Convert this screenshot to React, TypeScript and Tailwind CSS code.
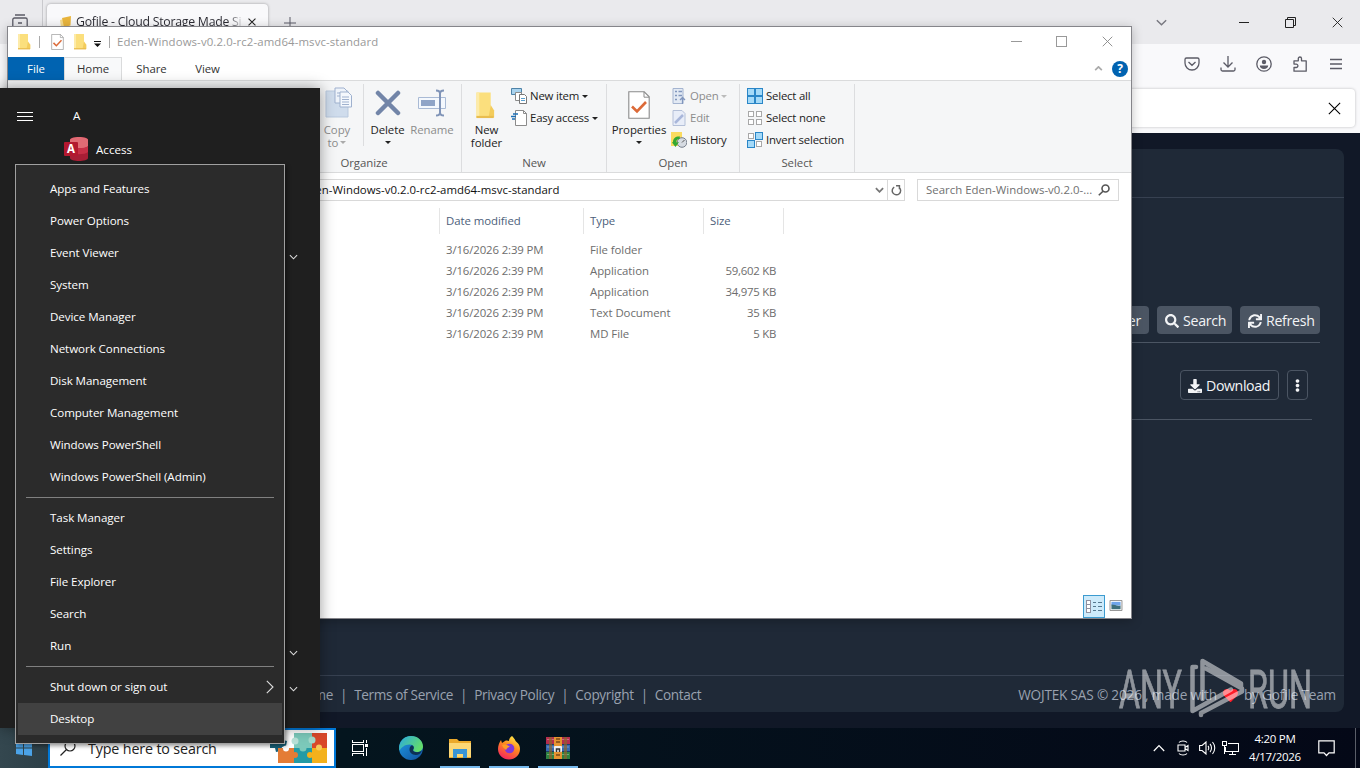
import React from "react";
import { FaSearch, FaSync, FaDownload, FaEllipsisV, FaHeart } from "react-icons/fa";

const files = [
    { date: "3/16/2026 2:39 PM", type: "File folder", size: "" },
    { date: "3/16/2026 2:39 PM", type: "Application", size: "59,602 KB" },
    { date: "3/16/2026 2:39 PM", type: "Application", size: "34,975 KB" },
    { date: "3/16/2026 2:39 PM", type: "Text Document", size: "35 KB" },
    { date: "3/16/2026 2:39 PM", type: "MD File", size: "5 KB" },
];

const menuGroups = [
    [
        "Apps and Features",
        "Power Options",
        "Event Viewer",
        "System",
        "Device Manager",
        "Network Connections",
        "Disk Management",
        "Computer Management",
        "Windows PowerShell",
        "Windows PowerShell (Admin)",
    ],
    ["Task Manager", "Settings", "File Explorer", "Search", "Run"],
    ["Shut down or sign out", "Desktop"],
];

function FolderIcon({ className }: { className: string }) {
    return (
        <svg viewBox="0 0 14 18" className={className} preserveAspectRatio="none">
            <path d="M1 1h10v11l2 1v4H1z" fill="#fbdf7d" />
            <path d="M1 1h2v16H1z" fill="#fdeba9" />
            <path d="M11 9l2.4 3.5V17H9.5z" fill="#f3cc5c" />
            <path d="M1 16h12v1.4H1z" fill="#e9bd4f" />
        </svg>
    );
}

function CheckSheet({ className }: { className: string }) {
    return (
        <svg viewBox="0 0 22 28" className={className} fill="none">
            <path d="M.8.8h15.4l5 5v21.4H.8z" fill="#fff" stroke="#8b8b8b" strokeWidth="1.1" />
            <path d="M16 .8v5.4h5" stroke="#8b8b8b" />
            <path d="M4 15.5l5 5 9-9.5" stroke="#dc6a38" strokeWidth="2.6" />
        </svg>
    );
}

function Caret({ className = "text-[#222]" }: { className?: string }) {
    return (
        <svg viewBox="0 0 6 3" className={`h-[3px] w-[6px] shrink-0 ${className}`}>
            <path d="M0 0h6L3 3z" fill="currentColor" />
        </svg>
    );
}

function Chevron({ className }: { className: string }) {
    return (
        <svg viewBox="0 0 10 6" className={className} fill="none" stroke="currentColor" strokeWidth="1.2">
            <path d="M1 1l4 4 4-4" />
        </svg>
    );
}

function Cross({ className }: { className: string }) {
    return (
        <svg viewBox="0 0 12 12" className={className} fill="none" stroke="currentColor">
            <path d="M.8.8l10.4 10.4M11.2.8L.8 11.2" />
        </svg>
    );
}

function BrowserWindow() {
    return (
        <div className="absolute inset-x-0 top-0 flex h-[728px] flex-col bg-[#f9f9fb]">
            <div className="flex h-11 shrink-0 bg-[#eaeaed]">
                <div className="flex h-[27px] w-[43px] border-r border-[#c9c9cd] pt-[14px] pl-3">
                    <svg viewBox="0 0 16 16" className="size-4" fill="none" stroke="#5b5b66" strokeWidth="1.3">
                        <path d="M3 1h10M2.5 4h11a1.7 1.7 0 0 1 1.7 1.7V14H.8V5.7A1.7 1.7 0 0 1 2.500 4zM6 9h4" />
                    </svg>
                </div>
                <div className="mt-1 ml-1 flex h-9 w-[221px] items-center rounded bg-[#f9f9fb] pr-[12px] pl-[12px] shadow-[0_0_3px_rgba(0,0,0,0.35)]">
                    <svg viewBox="0 0 14 14" className="size-3.5" fill="none">
                        <path d="M1 5l4-1 1 8-4 1z" fill="#f7dc8e" />
                        <path d="M3 3l9-2-.5 9.500L5 12z" fill="#e9b53c" />
                    </svg>
                    <span className="ml-[3px] w-[168px] bg-linear-to-r from-[#2a2a32] from-90% to-transparent bg-clip-text pt-px text-[12.3px] tracking-[-0.25px] whitespace-nowrap text-transparent">
                        Gofile - Cloud Storage Made Si
                    </span>
                    <Cross className="ml-auto size-2 shrink-0 stroke-[1.6] text-[#222]" />
                </div>
                <svg viewBox="0 0 12 12" className="mt-[17px] ml-4 size-3" stroke="#5b5b66" strokeWidth="1">
                    <path d="M6 0v12M0 6h12" />
                </svg>
                <div className="ml-auto flex h-11 items-center text-[#222]">
                    <Chevron className="mr-[71px] h-[7px] w-[13px] text-[#77777f]" />
                    <div className="mr-[36px] h-px w-[10px] bg-[#222]" />
                    <svg viewBox="0 0 11 11" className="mr-[36px] size-[11px]" fill="none" stroke="#222">
                        <path d="M.5 2.500h8v8h-8zM2.500 2.500v-2h8v8h-2" />
                    </svg>
                    <Cross className="mr-[17px] size-[11px]" />
                </div>
            </div>
            <div className="flex h-11 shrink-0 items-center justify-end gap-5 pr-4 pb-1 text-[#5b5b66]">
                <svg viewBox="0 0 16 16" className="size-4" fill="none" stroke="currentColor" strokeWidth="1.3">
                    <path d="M2.500 2h11a1.500 1.500 0 0 1 1.500 1.500V7A7 7 0 0 1 1 7V3.500A1.500 1.500 0 0 1 2.500 2zM4.500 6L8 9.300 11.500 6" />
                </svg>
                <svg viewBox="0 0 16 16" className="size-4" fill="none" stroke="currentColor" strokeWidth="1.3">
                    <path d="M8 0v10.500M3.500 6.500L8 11l4.500-4.500M1 11.500v2a1.500 1.500 0 0 0 1.500 1.500h11a1.500 1.500 0 0 0 1.500-1.500v-2" />
                </svg>
                <svg viewBox="0 0 16 16" className="size-4" fill="none" stroke="currentColor" strokeWidth="1.3">
                    <circle cx="8" cy="8" r="7.2" />
                    <circle cx="8" cy="6" r="2.2" fill="currentColor" stroke="none" />
                    <path d="M3.800 9.500h8.400c0 2-1.800 3.500-4.200 3.500s-4.200-1.500-4.200-3.500z" fill="currentColor" stroke="none" />
                </svg>
                <svg viewBox="0 0 16 16" className="size-4" fill="none" stroke="currentColor" strokeWidth="1.3">
                    <path
                        d="M2 15.200V11.500h2.200a1.700 1.700 0 0 0 0-3.400H2V4.800h4.300V2.600a1.600 1.600 0 0 1 3.200 0v2.200h4.700v10.400z"
                        strokeLinejoin="round"
                    />
                </svg>
                <svg viewBox="0 0 16 16" className="size-4" stroke="currentColor" strokeWidth="1.3">
                    <path d="M2 3.500h12M2 8h12M2 12.500h12" />
                </svg>
            </div>
            <div className="h-[45px] shrink-0 pt-px pr-[5px]">
                <div className="flex h-[38px] items-center justify-end rounded bg-white pr-[14px] shadow-[0_0_3px_rgba(0,0,0,0.25)]">
                    <Cross className="size-[13px] text-black" />
                </div>
            </div>
            <div className="flex-1 bg-[#111827] p-4">
                <div className="flex h-[563px] flex-col rounded-lg bg-[#1f2937] text-[14.2px] tracking-[-0.3px] text-gray-100">
                    <div className="h-[49px] shrink-0 border-b border-[#374151]" />
                    <div className="mt-[108px] mr-6 flex h-[37px] shrink-0 justify-end gap-2 border-b border-[#4b5563]">
                        <div className="flex h-7 items-center rounded bg-[#4b5563] px-2 pt-[2px]">Create Folder</div>
                        <div className="flex h-7 w-[75px] items-center gap-1 rounded bg-[#4b5563] pt-[2px] pl-2">
                            <FaSearch className="size-[14px] shrink-0" />
                            Search
                        </div>
                        <div className="flex h-7 w-20 items-center gap-1 rounded bg-[#4b5563] pt-[2px] pl-2">
                            <FaSync className="size-[14px] shrink-0" />
                            Refresh
                        </div>
                    </div>
                    <div className="mt-[27px] mr-8 flex h-[50px] shrink-0 justify-end gap-2 border-b border-[#4b5563] pr-1">
                        <div className="flex h-[30px] w-[99px] items-center gap-1 rounded border border-[#4b5563] pt-[2px] pl-[7px] tracking-[-0.4px]">
                            <FaDownload className="size-[14px] shrink-0" />
                            Download
                        </div>
                        <div className="flex h-[30px] w-[21px] items-center justify-center rounded border border-[#4b5563]">
                            <FaEllipsisV className="size-[13px]" />
                        </div>
                    </div>
                    <div className="mt-auto flex h-[37px] items-center gap-[7px] border-t border-[#374151] pt-[3px] pr-2 pl-[277px] text-[13.6px] tracking-[-0.35px] text-gray-400">
                        <span className="w-10 text-right">Home</span>
                        <span>|</span>
                        <span>Terms of Service</span>
                        <span>|</span>
                        <span>Privacy Policy</span>
                        <span>|</span>
                        <span>Copyright</span>
                        <span>|</span>
                        <span>Contact</span>
                        <span className="ml-auto flex items-center gap-[5px] tracking-[-0.18px]">
                            WOJTEK SAS © 2026 , made with <FaHeart className="mx-px size-[15px] text-[#ff1c28]" /> by Gofile Team
                        </span>
                    </div>
                </div>
            </div>
        </div>
    );
}

function RibbonGroup({ label, className, children }: { label: string; className: string; children: React.ReactNode }) {
    return (
        <div className={`flex h-[88px] shrink-0 flex-col border-r border-[#dcdddf] ${className}`}>
            <div className="flex h-[71px]">{children}</div>
            <div className="text-center leading-4 text-[#555]">{label}</div>
        </div>
    );
}

function BigButton({ icon, lines, caret, className }: { icon: React.ReactNode; lines: string[]; caret?: boolean; className: string }) {
    return (
        <div className={`flex shrink-0 flex-col items-center leading-[13px] whitespace-nowrap ${className}`}>
            <div className="mb-[3px] flex h-9 items-center justify-center pt-px">{icon}</div>
            {lines.map((line, i) => (
                <div key={line} className="flex items-center gap-[2px]">
                    {line}
                    {caret && i > 0 && i === lines.length - 1 && <Caret className="text-[#aaa]" />}
                </div>
            ))}
            {caret && lines.length === 1 && (
                <div className="pt-[5px]">
                    <Caret />
                </div>
            )}
        </div>
    );
}

function SmallButton({ icon, label, caret, muted }: { icon: React.ReactNode; label: string; caret?: boolean; muted?: boolean }) {
    return (
        <div className={`flex h-[22px] items-center gap-[3px] tracking-[-0.2px] whitespace-nowrap ${muted ? "text-[#8c8c8c]" : ""}`}>
            <div className="flex w-4 shrink-0 justify-center">{icon}</div>
            <span>{label}</span>
            {caret && <Caret className={muted ? "text-[#bbb]" : "text-[#222]"} />}
        </div>
    );
}

function Squares({ filled }: { filled: number[] }) {
    return (
        <svg viewBox="0 0 16 16" className="size-4" shapeRendering="crispEdges">
            {[0, 1, 2, 3].map((i) => {
                const on = filled.includes(i);
                const x = (i % 2) * 8;
                const y = Math.floor(i / 2) * 8;
                return on ? (
                    <rect key={i} x={x + 0.5} y={y + 0.5} width="7" height="7" fill="#a5daf8" stroke="#2a86c7" />
                ) : (
                    <rect key={i} x={x + 1.5} y={y + 1.5} width="5" height="5" fill="#fff" stroke="#a8a8a8" />
                );
            })}
        </svg>
    );
}

function Ribbon() {
    return (
        <div className="flex h-[93px] shrink-0 border-y border-[#dadbdc] bg-[#f5f6f7] pt-[3px] pl-[259px] text-[#222]">
            <RibbonGroup label="Organize" className="w-[195px]">
                <BigButton
                    className="ml-12 w-11 text-[#8c8c8c]"
                    lines={["Copy", "to"]}
                    caret
                    icon={
                        <svg viewBox="0 0 28 32" className="ml-1 h-8 w-7" fill="none">
                            <path d="M1 4h22v26H1z" fill="#cfdcec" stroke="#b9c9de" />
                            <path d="M10 1h9l3 3v12H10z" fill="#eef3fa" stroke="#9fb1ce" />
                            <path d="M15 5h8l3.500 3.500V20H15z" fill="#f4f8fd" stroke="#9fb1ce" />
                            <path d="M17 10h7M17 12.500h7M17 15h7M17 17.500h7M12 6h3M12 9h3" stroke="#9fb1ce" />
                        </svg>
                    }
                />
                <div className="mx-1 h-[62px] w-px bg-[#dcdddf]" />
                <BigButton
                    className="w-[39px]"
                    lines={["Delete"]}
                    caret
                    icon={
                        <svg viewBox="0 0 26 26" className="size-[26px]" stroke="#7285a8" strokeWidth="4.5" strokeLinecap="round">
                            <path d="M3 3l20 20M23 3L3 23" />
                        </svg>
                    }
                />
                <BigButton
                    className="ml-px w-12 text-[#8c8c8c]"
                    lines={["Rename"]}
                    icon={
                        <svg viewBox="0 0 28 28" className="size-7" fill="none">
                            <path d="M.5 8.500h27v11H.5z" fill="#f4f8fd" stroke="#a9bad5" />
                            <path d="M3 11h14v6H3z" fill="#8fa4c7" />
                            <path d="M18 1.500c3 0 4 1 4 3v19c0 2-1 3-4 3M26 1.500c-3 0-4 1-4 3M26 26.500c-3 0-4-1-4-3" stroke="#8094b8" strokeWidth="2" />
                        </svg>
                    }
                />
            </RibbonGroup>
            <RibbonGroup label="New" className="w-[145px]">
                <BigButton className="w-[49px]" lines={["New", "folder"]} icon={<FolderIcon className="mt-1 mr-1 h-7 w-5" />} />
                <div className="flex flex-col pt-px">
                    <SmallButton
                        label="New item"
                        caret
                        icon={
                            <svg viewBox="0 0 16 16" className="size-4" fill="none">
                                <path d="M.5.500h10v6H.5z" fill="#a9d3ee" stroke="#4e83a8" />
                                <path d="M4.500 4.500h6v8h-6z" fill="#fff" stroke="#8b8b8b" />
                                <path d="M8.500 6.500h5l2 2v7h-7z" fill="#fff" stroke="#777" />
                                <path d="M10 10.500h4M10 12.500h4" stroke="#5aa0cf" />
                            </svg>
                        }
                    />
                    <SmallButton
                        label="Easy access"
                        caret
                        icon={
                            <svg viewBox="0 0 16 16" className="size-4" fill="none">
                                <path d="M4.500.500h8l3 3v12h-11z" fill="#fff" stroke="#8b8b8b" />
                                <path d="M12.500.500v3h3" stroke="#8b8b8b" />
                                <path d="M2 4h5M0 6.500h5M1 9h3" stroke="#1c6fb5" strokeWidth="1.4" />
                            </svg>
                        }
                    />
                </div>
            </RibbonGroup>
            <RibbonGroup label="Open" className="w-[133px]">
                <BigButton className="w-16" lines={["Properties"]} caret icon={<CheckSheet className="mt-1 h-7 w-[22px]" />} />
                <div className="flex flex-col pt-px">
                    <SmallButton
                        label="Open"
                        caret
                        muted
                        icon={
                            <svg viewBox="0 0 14 16" className="h-4 w-3.5" fill="none" stroke="#a4b4d0">
                                <path d="M1 .5h10v15H1z" fill="#e3eaf4" />
                                <path d="M3 3.500h2M3 7.500h2M3 11.500h2M6.500 3.500H10M6.500 7.500H10M10.500 16v-6M8 12l2.500-2.500L13 12" stroke="#8196bd" strokeWidth="1.3" />
                            </svg>
                        }
                    />
                    <SmallButton
                        label="Edit"
                        muted
                        icon={
                            <svg viewBox="0 0 14 16" className="h-4 w-3.5" fill="none" stroke="#b4c0d8">
                                <path d="M1 .5h9l3 3v12H1z" fill="#e8edf8" />
                                <path d="M3 13l8-8" stroke="#a9b7da" strokeWidth="2.5" />
                            </svg>
                        }
                    />
                    <SmallButton
                        label="History"
                        icon={
                            <svg viewBox="0 0 16 16" className="size-4 shrink-0" fill="none">
                                <path d="M0 0h11v14H0z" fill="#fbdb5f" />
                                <circle cx="11" cy="10.5" r="4.8" fill="#d6dbe2" stroke="#777f8c" />
                                <path d="M11 10.500l2.500-2.500" stroke="#555" />
                                <path d="M2 10c0-4 3-6 7-5.500L8.500 7C6 7 5 8.500 5.500 10.500L8 10l-3.500 5L1 10.500z" fill="#35a832" />
                            </svg>
                        }
                    />
                </div>
            </RibbonGroup>
            <RibbonGroup label="Select" className="w-[115px]">
                <div className="flex flex-col pt-px pl-[7px]">
                    <SmallButton label="Select all" icon={<Squares filled={[0, 1, 2, 3]} />} />
                    <SmallButton label="Select none" icon={<Squares filled={[]} />} />
                    <SmallButton label="Invert selection" icon={<Squares filled={[1, 2]} />} />
                </div>
            </RibbonGroup>
        </div>
    );
}

function ExplorerWindow() {
    return (
        <div className="absolute top-[26px] left-[7px] flex h-[593px] w-[1125px] flex-col border border-[#85858a] bg-white text-[11.4px] tracking-[-0.05px] shadow-[0_2px_10px_rgba(0,0,0,0.25)]">
            <div className="mb-px flex h-[29px] shrink-0 items-center">
                <FolderIcon className="ml-[9px] h-[17px] w-3.5" />
                <div className="ml-2 h-3 w-px bg-[#aaa]" />
                <CheckSheet className="ml-[11px] h-4 w-[13px]" />
                <FolderIcon className="ml-[9px] h-[17px] w-3.5" />
                <svg viewBox="0 0 7 6" className="mt-1 ml-[7px] h-[6px] w-[7px]">
                    <path d="M0 0h7v1H0zM0 2.500h7L3.500 6z" fill="#111" />
                </svg>
                <div className="ml-[8px] h-3 w-px bg-[#aaa]" />
                <span className="ml-[7px] tracking-[0.11px] text-[#999]">Eden-Windows-v0.2.0-rc2-amd64-msvc-standard</span>
                <div className="ml-auto flex items-center text-[#888]">
                    <div className="h-px w-[11px] bg-[#999]" />
                    <div className="ml-[34px] size-[11px] border border-[#999]" />
                    <Cross className="mr-[18px] ml-[35px] size-[11px]" />
                </div>
            </div>
            <div className="flex h-[23px] shrink-0 items-center text-[#333]">
                <div className="flex h-[23px] w-14 items-center justify-center bg-[#0063b1] text-white">File</div>
                <div className="flex h-[23px] w-[58px] items-center justify-center border-x border-t border-[#dadbdc] bg-[#f8f9fa]">Home</div>
                <div className="w-[59px] text-center">Share</div>
                <div className="w-[53px] text-center">View</div>
                <Chevron className="ml-auto h-[5px] w-[9px] rotate-180 stroke-2 text-[#aaa]" />
                <div className="mr-[3px] ml-[9px] flex size-4 items-center justify-center rounded-full bg-[#0063b1] text-[12px] font-bold text-white">?</div>
            </div>
            <Ribbon />
            <div className="flex h-[33px] shrink-0 items-center pt-px text-[#111]">
                <div className="ml-[91px] flex h-[22px] w-[806px] items-center border border-[#d9d9d9] pl-[202px]">
                    <span className="tracking-[0.02px]">Eden-Windows-v0.2.0-rc2-amd64-msvc-standard</span>
                    <Chevron className="mr-[3px] ml-auto h-[6px] w-[9px] stroke-2 text-[#777]" />
                    <div className="flex h-[22px] w-[17px] items-center justify-center border-l border-[#d9d9d9]">
                        <svg viewBox="0 0 12 12" className="size-[11px]" fill="none" stroke="#666" strokeWidth="1.6">
                            <path d="M3.500 2.200A4.600 4.600 0 1 0 9 2.700M5.500.800H9.200V4.500" />
                        </svg>
                    </div>
                </div>
                <div className="ml-3 flex h-[22px] w-[202px] items-center border border-[#d9d9d9] px-2 text-[#707070]">
                    <span className="tracking-[0.03px]">Search Eden-Windows-v0.2.0-...</span>
                    <svg viewBox="0 0 12 12" className="ml-auto size-3" fill="none" stroke="#555" strokeWidth="1.6">
                        <circle cx="7.5" cy="4.5" r="3.5" />
                        <path d="M5 7.200L.8 11.300" />
                    </svg>
                </div>
            </div>
            <div className="flex h-[29px] shrink-0 pt-[2px] pl-[431px] leading-[26px] text-[#4c607a]">
                <div className="h-[26px] w-36 border-l border-[#e5e5e5] pl-[6px]">Date modified</div>
                <div className="h-[26px] w-[120px] border-l border-[#e5e5e5] pl-[6px]">Type</div>
                <div className="h-[26px] w-[81px] border-x border-[#e5e5e5] pl-[6px]">Size</div>
            </div>
            <div className="pt-1 pl-[438px] leading-[21px] text-[#6d6d6d]">
                {files.map((file, i) => (
                    <div key={i} className="flex h-[21px]">
                        <span className="w-36 tracking-[-0.12px]">{file.date}</span>
                        <span className="w-[100px]">{file.type}</span>
                        <span className="w-[86px] text-right tracking-[-0.25px]">{file.size}</span>
                    </div>
                ))}
            </div>
            <div className="mt-auto flex items-center justify-end gap-1 pr-2">
                <div className="flex h-[23px] w-[22px] items-center justify-center border border-[#3c9bd0] bg-[#cdeafa]">
                    <svg viewBox="0 0 16 14" className="h-3.5 w-4" fill="none" shapeRendering="crispEdges">
                        <path d="M.5.500h4v4h-4zM.5 4.500h4v4h-4zM.5 8.500h4v4h-4z" fill="#fff" stroke="#8f8f9f" />
                        <path d="M7 2.500h3M12 2.500h4M7 6.500h3M12 6.500h4M7 10.500h3M12 10.500h4" stroke="#56788f" />
                    </svg>
                </div>
                <svg viewBox="0 0 14 12" className="mb-[2px] h-[11px] w-3.5">
                    <path d="M.5.500h13v11H.5z" fill="#fff" stroke="#8a8a8a" />
                    <path d="M2 2h10v4H2z" fill="#6ea4ea" />
                    <path d="M2 5c4 0 6 2 10 1v4H2z" fill="#3d6f7c" />
                </svg>
            </div>
        </div>
    );
}

function StartMenu() {
    return (
        <div className="absolute top-[88px] left-0 flex h-[640px] w-80 bg-[#1f1f1f] text-[11.6px] text-white shadow-[0_0_14px_rgba(0,0,0,0.4)]">
            <div className="flex w-12 flex-col gap-[3px] pt-6 pl-[17px]">
                <div className="h-px w-4 bg-white" />
                <div className="h-px w-4 bg-white" />
                <div className="h-px w-4 bg-white" />
            </div>
            <div className="flex-1 pt-[18px] pl-4">
                <div className="h-5 pl-[9px] leading-5">A</div>
                <div className="mt-[11px] flex items-center gap-2">
                    <svg viewBox="0 0 24 24" className="size-6">
                        <path d="M6 3c0-4 18-4 18 0v18c0 4-18 4-18 0z" fill="#a81e35" />
                        <path d="M6 3c0-4 18-4 18 0v6c0 3-18 3-18 0z" fill="#e06b74" />
                        <path d="M6 9c3 3 15 3 18 0v6c-3 3-15 3-18 0z" fill="#c72f46" />
                        <rect y="5" width="14" height="14" rx="1" fill="#b3182f" />
                        <text x="7" y="16.2" textAnchor="middle" fontSize="11.5" fontWeight="700" fill="#fff">A</text>
                    </svg>
                    <span className="pt-[2px]">Access</span>
                </div>
            </div>
            <div className="flex w-[31px] flex-col text-[#ddd]">
                <Chevron className="mt-[166px] h-[6px] w-[9px]" />
                <Chevron className="mt-[390px] h-[6px] w-[9px]" />
                <Chevron className="mt-[30px] h-[6px] w-[9px]" />
            </div>
        </div>
    );
}

function ContextMenu() {
    return (
        <div className="absolute top-[164px] left-[15px] h-[580px] w-[270px] border border-[#a0a0a0] bg-[#2b2b2b] px-[2px] pt-2 text-[11.6px] tracking-[-0.07px] text-white shadow-[2px_2px_4px_rgba(0,0,0,0.4)]">
            {menuGroups.map((group, index) => (
                <div key={index}>
                    {index > 0 && <div className="mx-2 my-1 h-px bg-[#808080]" />}
                    {group.map((item) => (
                        <div
                            key={item}
                            className={`flex h-8 items-center justify-between pr-2 pl-8 ${item === "Desktop" ? "bg-[#414141]" : ""}`}
                        >
                            {item}
                            {item.startsWith("Shut") && (
                                <svg viewBox="0 0 8 14" className="h-3.5 w-2" fill="none" stroke="#ddd" strokeWidth="1.1">
                                    <path d="M.8.800L7 7 .8 13.200" />
                                </svg>
                            )}
                        </div>
                    ))}
                </div>
            ))}
        </div>
    );
}

function Taskbar() {
    return (
        <div className="absolute inset-x-0 bottom-0 flex h-10 bg-linear-to-r from-[#34474f] via-[#04151e] via-25% to-[#040817] text-white">
            <div className="flex w-12 items-center justify-center">
                <svg viewBox="0 0 16 16" className="size-4" fill="#4ba3e8">
                    <path d="M0 2.200L7 1.200v6.400H0zM8 1l8-1v7.600H8zM0 8.500h7v6.400l-7-1zM8 8.500h8V16l-8-1z" />
                </svg>
            </div>
            <div className="flex w-72 items-center border-2 border-[#0078d7] bg-white pl-[9px] text-black">
                <svg viewBox="0 0 18 18" className="size-[18px]" fill="none" stroke="#222" strokeWidth="1.2">
                    <circle cx="11" cy="7" r="5" />
                    <path d="M7.500 10.500L1.500 16.500" />
                </svg>
                <span className="ml-[11px] pt-[2px] text-[14.3px] tracking-[-0.15px] text-[#222]">Type here to search</span>
                <svg viewBox="0 0 64 34" className="mr-[6px] ml-auto h-[34px] w-16">
                    <path d="M6 10l6-1 1-3 5-1 1 4 4 1-1 5-4 1-1 4-5 1-1-4H6z" fill="#17617a" />
                    <path d="M14 17h17v15H14z" fill="#e47c36" />
                    <path d="M30 2h18v15H30z" fill="#7cc9ba" />
                    <path d="M48 2h15v15H48z" fill="#d9482a" />
                    <path d="M30 17h18v15H30z" fill="#249ba5" />
                    <path d="M48 17h15v15H48z" fill="#f3b11c" />
                    <circle cx="31" cy="10" r="3.5" fill="#b9e2d8" />
                    <circle cx="22" cy="17.500" r="3" fill="#fff" />
                    <circle cx="48" cy="9" r="3.500" fill="#a5dacb" />
                    <circle cx="39" cy="17" r="3.500" fill="#7cc9ba" />
                    <circle cx="55" cy="16.500" r="3" fill="#f7c95a" />
                    <circle cx="31" cy="24" r="3" fill="#e47c36" />
                    <circle cx="46" cy="24" r="3" fill="#f3b11c" />
                </svg>
            </div>
            <div className="flex w-12 items-center justify-center">
                <svg viewBox="0 0 17 16" className="h-4 w-[17px]" fill="none" stroke="#fff" shapeRendering="crispEdges">
                    <path d="M.5 0v2.500h11V0M.5 4.500h11v7H.5zM.5 16v-2.500h11V16M14.500 0v3M14.500 8v8" />
                    <path d="M13 4h3v3h-3z" fill="#fff" stroke="none" />
                </svg>
            </div>
            <div className="ml-[3px] flex w-12 items-center justify-center">
                <svg viewBox="0 0 24 24" className="size-6">
                    <defs>
                        <linearGradient id="edgeTop" x1="0" y1="0" x2="1" y2=".5">
                            <stop offset="0" stopColor="#2aa9e0" />
                            <stop offset="1" stopColor="#63dc6b" />
                        </linearGradient>
                        <linearGradient id="edgeLow" x1="0" y1="0" x2="1" y2="1">
                            <stop offset="0" stopColor="#1e9ce6" />
                            <stop offset="1" stopColor="#114f9c" />
                        </linearGradient>
                    </defs>
                    <circle cx="12" cy="12" r="12" fill="url(#edgeLow)" />
                    <path d="M.3 10C1.500 4 6 0 12 0c7 0 12 5 12 10.500 0 3.500-3 5.500-6 5.500-3.500 0-4.500-1.500-3.500-3 .8-1.500 0-4.500-4-4.500-5 0-8 3-10 6A12 12 0 0 1 .3 10z" fill="url(#edgeTop)" />
                    <path d="M14.500 13c-1 1.500 0 3.200 3.500 3.200 2 0 3.700-.7 4.800-1.700-1 3-3.300 4.500-6 4.500-4 0-6.300-2.800-6.300-5.500 0-2 1-3.500 2.300-4.200 2 .5 2.500 2.500 1.700 3.700z" fill="#0d3154" />
                </svg>
            </div>
            <div className="flex">
                <TaskButton>
                    <svg viewBox="0 0 24 24" className="size-6">
                        <path d="M1 3h8l2 2h12v17H1z" fill="#eba92b" />
                        <path d="M1 7h22v14H1z" fill="#fcd775" />
                        <path d="M5 13h14v9h-4v-4H9v4H5z" fill="#3994d5" />
                    </svg>
                </TaskButton>
                <TaskButton>
                    <svg viewBox="0 0 24 24" className="size-6">
                        <defs>
                            <linearGradient id="fox" x1=".8" y1="0" x2=".3" y2="1">
                                <stop offset="0" stopColor="#fff04a" />
                                <stop offset=".45" stopColor="#ff8a1f" />
                                <stop offset="1" stopColor="#f5235f" />
                            </linearGradient>
                        </defs>
                        <path d="M15 0c3 3 3 4 4 5.500 3 2 4 5 4 7.500 0 6-5 10.500-11 10.500S1 19 1 13c0-3 1-6 3-9l1 3 3-2c2-1 3 0 4 0 0-2 1-4 3-5z" fill="url(#fox)" />
                        <circle cx="12.5" cy="12.5" r="4.8" fill="#8138d8" />
                        <path d="M5 9c3-1 6 0 8 2-2 0-3 1-4 3-1-1-3-2-4-5z" fill="#ff9d25" />
                    </svg>
                </TaskButton>
                <TaskButton>
                    <svg viewBox="0 0 24 22" className="h-[22px] w-6">
                        <rect y="0" width="24" height="7" fill="#b52d4d" />
                        <rect y="7.5" width="24" height="7" fill="#3769b0" />
                        <rect y="15" width="24" height="7" fill="#2f8140" />
                        <path d="M1 2.500h22M1 10h22M1 17.500h22" stroke="#fff" opacity=".3" />
                        <path d="M3 0h3v22H3zM18 0h3v22h-3z" fill="#8b642c" opacity=".7" />
                        <rect x="8" width="8" height="22" fill="#e59430" />
                        <path d="M10 2h4M10 5h4M10 18h4" stroke="#7b4a17" strokeWidth="1.5" />
                        <rect x="8" y="9" width="8" height="6" rx="1" fill="#eee" />
                        <path d="M10.500 15v-3h3v3" stroke="#333" fill="none" strokeWidth="1.5" />
                    </svg>
                </TaskButton>
            </div>
            <div className="ml-auto flex items-center">
                <svg viewBox="0 0 12 8" className="mr-[12px] h-2 w-3" fill="none" stroke="#fff" strokeWidth="1.2">
                    <path d="M.8 7L6 1.500 11.200 7" />
                </svg>
                <svg viewBox="0 0 12 16" className="mr-[10px] h-4 w-3" fill="none" stroke="#fff" strokeWidth="1.1">
                    <path d="M2 2.500C3.500.500 8.500.500 10 2.500M2 13.500c1.500 2 6.500 2 8 0M1 5h7v6H1zM8 7.500l3-2v5l-3-2" />
                </svg>
                <svg viewBox="0 0 17 14" className="mr-[6px] h-3.5 w-[17px]" fill="none" stroke="#fff" strokeWidth="1.1">
                    <path d="M.6 4.500h2.500L7 1v12L3.100 9.500H.600zM9 5c1 1 1 3 0 4M11 3c2 2 2 6 0 8M13.500 1c3 3.500 3 8.500 0 12" />
                </svg>
                <svg viewBox="0 0 17 14" className="h-3.5 w-[17px]" fill="none" stroke="#fff" shapeRendering="crispEdges">
                    <path d="M6 2.500h10.500v8H3.500V6M.5.500h4v4h-4zM7 13.500h7M10.500 10.500v3M2.500 5v8" />
                </svg>
                <div className="ml-[9px] w-[54px] text-center text-[11.5px] leading-[18px] tracking-[-0.3px] whitespace-nowrap">
                    <div>4:20 PM</div>
                    <div>4/17/2026</div>
                </div>
                <svg viewBox="0 0 17 17" className="mr-[20px] ml-[16px] size-[17px]" fill="none" stroke="#fff" strokeWidth="1.2">
                    <path d="M.8.800h15.400v12H11L8.500 15.500 6 12.800H.800z" />
                </svg>
                <div className="mr-1 h-10 w-px bg-[#5a5e68]" />
            </div>
        </div>
    );
}

function TaskButton({ children }: { children: React.ReactNode }) {
    return (
        <div className="flex h-10 w-[49px] flex-col items-center">
            <div className="flex h-[38px] items-center pt-[2px]">{children}</div>
            <div className="h-[2px] w-10 bg-[#76b9ed]" />
        </div>
    );
}

function Watermark() {
    return (
        <svg viewBox="0 0 194 62" className="absolute top-[658px] left-[1118px] h-[62px] w-[194px] opacity-50" fill="none" stroke="#fff">
            <g fill="#fff" stroke="#fff" strokeWidth=".8" fontFamily="Roboto, sans-serif" fontSize="53">
                <text x="1" y="50" textLength="63" lengthAdjust="spacingAndGlyphs">ANY</text>
                <text x="130" y="50" textLength="64" lengthAdjust="spacingAndGlyphs">RUN</text>
            </g>
            <path
                strokeWidth="4.5"
                strokeLinejoin="round"
                strokeLinecap="round"
                d="M78 9h-3.500V53L113 31.500M84.500 41V3L123 25.500v4M83 57v-2L124 33.500v-3L88 10.500"
            />
        </svg>
    );
}

export default function App() {
    return (
        <div className="relative h-[768px] w-[1360px] overflow-hidden font-['Open_Sans','Noto_Sans',sans-serif]">
            <BrowserWindow />
            <ExplorerWindow />
            <Taskbar />
            <StartMenu />
            <ContextMenu />
            <Watermark />
        </div>
    );
}
